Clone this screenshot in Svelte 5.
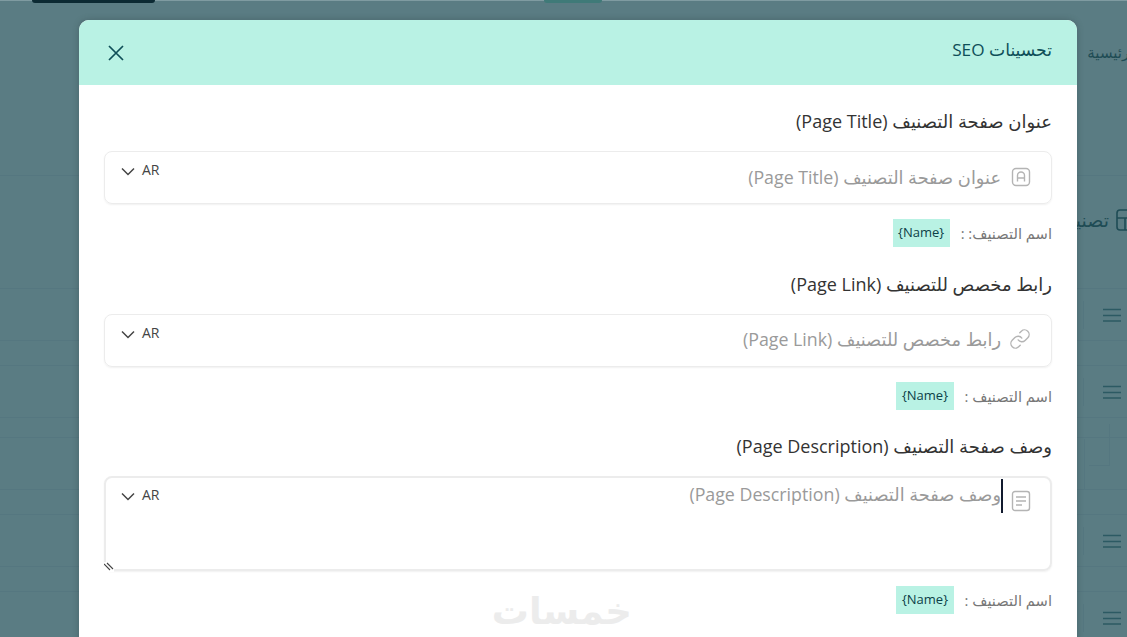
<script lang="ts">
  const fields = [
    { label: 'عنوان صفحة التصنيف (Page Title)', ph: 'عنوان صفحة التصنيف (Page Title)', hint: 'اسم التصنيف: :', icon: 'title', area: false },
    { label: 'رابط مخصص للتصنيف (Page Link)', ph: 'رابط مخصص للتصنيف (Page Link)', hint: 'اسم التصنيف :', icon: 'link', area: false },
    { label: 'وصف صفحة التصنيف (Page Description)', ph: 'وصف صفحة التصنيف (Page Description)', hint: 'اسم التصنيف :', icon: 'doc', area: true },
  ];
  const rows = [
    { burger: true },
    { burger: true },
    { burger: false },
    { burger: true },
    { burger: true },
  ];
</script>

<div class="page" dir="rtl">
  <div class="topline"></div>
  <div class="topbits">
    <span class="bit-teal"></span>
    <span class="bit-dark"></span>
  </div>

  <div class="behind">
    <div class="nav">الرئيسية</div>
    <div class="cat-head">
      <svg width="24" height="24" viewBox="0 0 24 24" fill="none" stroke="#1f4c55" stroke-width="1.6">
        <rect x="2" y="2" width="20" height="20" rx="3" />
        <path d="M2 10h20M10 10v12M13 15h9" />
      </svg>
      <span>تصنيفات</span>
    </div>
    <div class="rows">
      {#each rows as r, i}
        <div class="row" class:short={i === 1}>
          <div class="row-body">
            {#if r.burger}
              <svg class="burger" width="18" height="14" viewBox="0 0 18 14" stroke="#2c5a63" stroke-width="1.6">
                <path d="M0 1.5h18M0 7.5h18M0 13h18" />
              </svg>
              <span class="divider"></span>
            {:else}
              <span class="ghost ghost-a"></span>
              <span class="ghost ghost-b"></span>
            {/if}
          </div>
          <div class="row-gap"></div>
        </div>
      {/each}
    </div>
  </div>

  <div class="modal">
    <header class="m-head">
      <h2>تحسينات SEO</h2>
      <svg class="close" width="18" height="18" viewBox="0 0 18 18" fill="none" stroke="#0f4f58" stroke-width="1.7">
        <path d="M2 2l14 14M16 2L2 16" />
      </svg>
    </header>
    <div class="m-body">
      {#each fields as f}
        <section class="field">
          <div class="label">{f.label}</div>
          <div class="input" class:area={f.area}>
            <div class="ph-wrap">
              {#if f.icon === 'title'}
                <svg class="ic" width="20" height="20" viewBox="0 0 20 20" fill="none" stroke="#b4b4b4" stroke-width="1.4">
                  <rect x="1.5" y="1.5" width="17" height="17" rx="3.5" />
                  <path d="M6.5 14.5V8.5a3.5 3.5 0 0 1 7 0v6M6.5 11h7" />
                </svg>
              {:else if f.icon === 'link'}
                <svg class="ic link" width="22" height="22" viewBox="0 0 24 24" fill="none" stroke="#b4b4b4" stroke-width="1.5" stroke-linecap="round" stroke-linejoin="round">
                  <path d="M10 13a5 5 0 0 0 7.54.54l3-3a5 5 0 0 0-7.07-7.07l-1.72 1.71" />
                  <path d="M14 11a5 5 0 0 0-7.54-.54l-3 3a5 5 0 0 0 7.07 7.07l1.71-1.71" />
                </svg>
              {:else}
                <svg class="ic doc" width="20" height="22" viewBox="0 0 20 22" fill="none" stroke="#b4b4b4" stroke-width="1.4">
                  <rect x="1.5" y="1.5" width="17" height="19" rx="2.5" />
                  <path d="M5 7h10M5 11h10M5 15h6" />
                </svg>
              {/if}
              {#if f.area}<span class="caret"></span>{/if}
              <span class="ph">{f.ph}</span>
            </div>
            <div class="lang">
              <span>AR</span>
              <svg width="14" height="9" viewBox="0 0 14 9" fill="none" stroke="#444" stroke-width="1.5">
                <path d="M1 1.5l6 6 6-6" />
              </svg>
            </div>
            {#if f.area}
              <svg class="grip" width="10" height="10" viewBox="0 0 10 10" stroke="#444" stroke-width="1.1">
                <path d="M0 2l6 6M3 1l6 6" />
              </svg>
            {/if}
          </div>
          <div class="hint">
            <span>{f.hint}</span>
            <span class="tag">{'{Name}'}</span>
          </div>
        </section>
      {/each}
    </div>
  </div>

  <div class="mark">خمسات</div>
</div>

<style>
  :global(body) { margin: 0; }
  .page {
    position: relative;
    width: 1127px;
    height: 637px;
    overflow: hidden;
    background: #5a7c83;
    font-family: "Open Sans", "DejaVu Sans", sans-serif;
    color: #333;
  }
  .topline { height: 1px; background: #7f9ba1; }
  .topbits { position: absolute; top: 0; left: 32px; width: 570px; height: 3px; display: flex; justify-content: space-between; }
  .bit-teal { width: 58px; height: 3px; background: #3f7a78; border-radius: 0 0 3px 3px; }
  .bit-dark { width: 123px; height: 3px; background: #0c2a33; border-radius: 0 0 4px 4px; }

  .behind { color: #1f4c55; }
  .nav { padding: 41px 0 0 0; margin-right: -12px; font-size: 15px; height: 175px; box-sizing: border-box; border-bottom: 1px solid #557780; }
  .cat-head { display: flex; align-items: center; gap: 6px; margin-right: -12px; height: 112px; font-size: 19px; box-sizing: border-box; padding-bottom: 24px; }
  .rows { border-top: 1px solid #557780; }
  .row-body { position: relative; height: 52px; border-bottom: 1px solid #557780; display: flex; align-items: center; padding-right: 6px; box-sizing: border-box; }
  .row-gap { height: 25px; border-bottom: 1px solid #557780; box-sizing: border-box; }
  .row.short .row-gap { height: 20px; }
  .burger { display: block; margin-top: 1px; }
  .divider { margin-right: 19px; width: 1px; height: 28px; background: #557780; }
  .ghost { position: absolute; border-right: 1px solid #557780; }
  .ghost-a { right: 17px; top: -14px; width: 20px; height: 41px; border-bottom: 1px solid #557780; }
  .ghost-b { right: 42px; top: 1px; width: 8px; height: 50px; }

  .modal {
    position: absolute;
    top: 20px;
    left: 79px;
    width: 998px;
    height: 700px;
    background: #fff;
    border-radius: 10px 10px 0 0;
    box-shadow: 0 0 6px rgba(40, 60, 60, 0.35);
  }
  .m-head {
    height: 65px;
    background: #b9f2e4;
    border-radius: 10px 10px 0 0;
    display: flex;
    align-items: center;
    justify-content: space-between;
    padding: 0 25px 0 28px;
    box-sizing: border-box;
    color: #0f4f58;
  }
  .m-head h2 { margin: 0 0 6px; font-size: 17.2px; font-weight: 400; }
  .close { margin-top: 1px; }
  .m-body { padding: 24px 25px 0; display: flex; flex-direction: column; gap: 24.5px; }
  .field { display: flex; flex-direction: column; }
  .label { font-size: 18px; line-height: 24px; color: #333; font-weight: 500; margin-bottom: 18px; }
  .input {
    position: relative;
    height: 53px;
    box-sizing: border-box;
    border: 1px solid #ececec;
    border-radius: 8px;
    box-shadow: 0 1px 2px rgba(0, 0, 0, 0.06);
    display: flex;
    justify-content: space-between;
    padding: 0 20px 0 16px;
  }
  .input.area { height: 95px; border: 2px solid #ececec; padding-right: 19px; padding-left: 15px; }
  .ph-wrap { display: flex; align-items: center; gap: 10px; height: 49px; color: #9a9a9a; font-size: 17.8px; position: relative; }
  .area .ph-wrap { align-items: flex-start; height: 40px; }
  .area .ph { line-height: 32px; }
  .area .ic { margin-top: 12px; }
  .ic.link { margin-left: -2px; }
  .caret { position: absolute; right: 28px; top: 1px; width: 2px; height: 34px; background: #111a2e; }
  .lang { display: flex; align-items: flex-start; gap: 7px; font-size: 14px; color: #444; height: 36px; padding-top: 8px; box-sizing: border-box; }
  .area .lang { padding-top: 7px; }
  .lang svg { margin-top: 7px; }
  .grip { position: absolute; left: -2px; bottom: -3px; background: #fff; }
  .hint { display: flex; align-items: center; gap: 11px; margin-top: 15px; font-size: 14.7px; color: #777; height: 28px; }
  .tag { background: #b9f2e4; color: #0c3f48; font-size: 13px; height: 28px; line-height: 26px; padding: 0 5.5px; direction: ltr; }
  .mark {
    position: absolute;
    left: 495px;
    top: 585px;
    width: 137px;
    text-align: center;
    font-size: 37px;
    line-height: 50px;
    font-weight: 700;
    color: #ececec;
  }
</style>
